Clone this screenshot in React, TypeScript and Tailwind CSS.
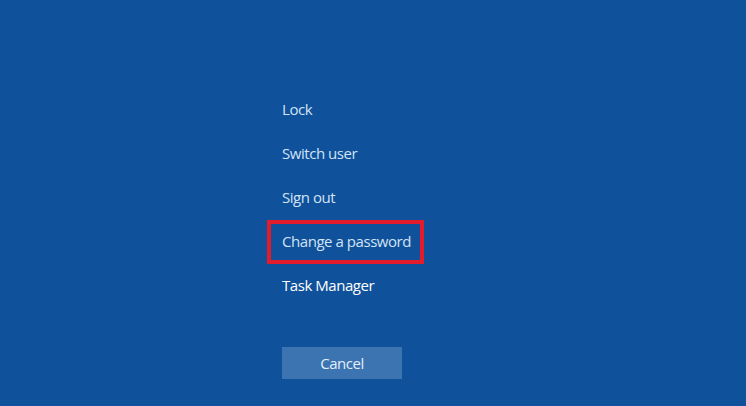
import React from 'react';

const items = ['Lock', 'Switch user', 'Sign out', 'Change a password'];

const App: React.FC = () => {
  return (
    <div
      className="w-[746px] h-[406px] bg-[#0f519b] overflow-hidden"
      style={{ fontFamily: '"Open Sans", "Noto Sans", sans-serif' }}
    >
      <div className="flex flex-col pl-[282px] pt-[87px]">
        {items.map((label) => (
          <div key={label} className="relative h-[44px] flex items-center">
            <span className="text-[15px] text-[#d3e3f5] tracking-[-0.45px]">{label}</span>
            {label === 'Change a password' && (
              <div className="absolute left-[-15px] top-[1px] w-[157px] h-[44px] border-[4px] border-[#e21c2b]" />
            )}
          </div>
        ))}
        <div className="h-[44px] flex items-center">
          <span className="text-[15px] text-white tracking-[-0.45px]">Task Manager</span>
        </div>
        <button className="mt-[40px] w-[120px] h-[32px] bg-[#3b74b1] text-[15px] text-[#e4eefa] tracking-[-0.45px]">
          Cancel
        </button>
      </div>
    </div>
  );
};

export default App;
